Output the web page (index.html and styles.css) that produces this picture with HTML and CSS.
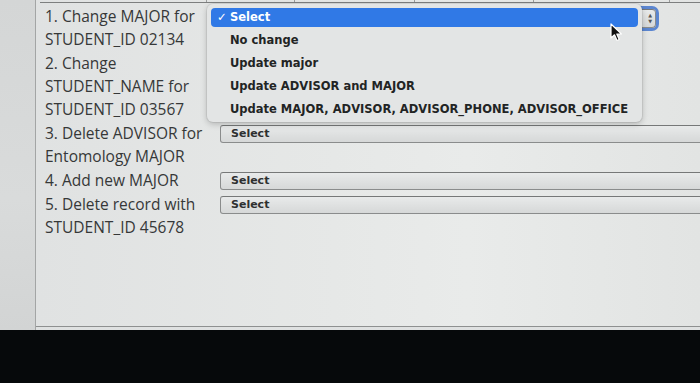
FILE: index.html
```html
<!DOCTYPE html>
<html>
<head>
<meta charset="utf-8">
<link rel="stylesheet" href="styles.css">
</head>
<body>
<div class="screen">
  <div class="gutter"></div>
  <div class="panel">
    <div class="head">
      <span class="hc c1"></span><span class="hc c2"></span><span class="hc c3"></span><span class="hc c4"></span><span class="hc c5"></span>
    </div>
    <div class="rows">
      <div class="row">
        <div class="label">1. Change MAJOR for STUDENT_ID 02134</div>
        <div class="field"><div class="select focused"><span class="stepper">&#9650;<br>&#9660;</span></div></div>
      </div>
      <div class="row">
        <div class="label">2. Change STUDENT_NAME for STUDENT_ID 03567</div>
        <div class="field"><div class="select hidden-under"></div></div>
      </div>
      <div class="row">
        <div class="label">3. Delete ADVISOR for Entomology MAJOR</div>
        <div class="field"><div class="select wide">Select</div></div>
      </div>
      <div class="row">
        <div class="label">4. Add new MAJOR</div>
        <div class="field"><div class="select wide">Select</div></div>
      </div>
      <div class="row">
        <div class="label">5. Delete record with STUDENT_ID 45678</div>
        <div class="field"><div class="select wide">Select</div></div>
      </div>
    </div>
    <div class="menu">
      <div class="opt active"><span class="check">&#10003;</span>Select</div>
      <div class="opt">No change</div>
      <div class="opt">Update major</div>
      <div class="opt">Update ADVISOR and MAJOR</div>
      <div class="opt">Update MAJOR, ADVISOR, ADVISOR_PHONE, ADVISOR_OFFICE</div>
    </div>
    <svg class="cursor" width="14" height="20" viewBox="0 0 14 20">
      <path d="M1 1 L1 15 L4.5 11.8 L7 17.5 L9.2 16.5 L6.8 11 L11.5 11 Z" fill="#111" stroke="#fff" stroke-width="1.2" stroke-linejoin="round"/>
    </svg>
  </div>
</div>
<div class="bezel"></div>
</body>
</html>
```
FILE: styles.css
```css
html, body {
  margin: 0;
  padding: 0;
  background: #06090b;
  overflow: hidden;
}
.screen {
  height: 330px;
  display: flex;
  background: #dfe1e1;
}
.gutter {
  width: 35px;
  background: linear-gradient(180deg, #d4d6d6, #d9dbdb 60%, #d2d4d4);
  border-right: 1px solid #a3a5a5;
}
.panel {
  flex: 1;
  position: relative;
  height: 327px;
  box-sizing: border-box;
  border-bottom: 1px solid #8e9090;
  background: linear-gradient(90deg, #e0e2e2, #e6e8e7 45%, #e9ebea 65%, #e2e4e3);
  overflow: hidden;
}
.head {
  height: 2px;
  margin-left: 4px;
  border-bottom: 1px solid #7d7f7f;
  display: flex;
}
.hc {
  display: block;
  height: 2px;
  border-right: 1px solid #9a9c9c;
  box-sizing: border-box;
}
.c1 { width: 167px; }
.c2 { width: 88px; }
.c3 { width: 120px; }
.c4 { width: 119px; }
.c5 { width: 136px; }
.rows {
  padding: 2px 0 0 9px;
  display: flex;
  flex-direction: column;
}
.row {
  display: grid;
  grid-template-columns: 175px 1fr;
  padding-bottom: 1px;
}
.label {
  font-family: "Open Sans", "Liberation Sans", sans-serif;
  font-size: 15.5px;
  line-height: 23px;
  color: #363838;
  width: 172px;
}
.field {
  padding-top: 3px;
}
.select {
  position: relative;
  box-sizing: border-box;
  height: 18px;
  width: 436px;
  padding-left: 10px;
  font-family: "DejaVu Sans", Verdana, sans-serif;
  font-weight: bold;
  font-size: 11px;
  line-height: 15px;
  color: #2e3030;
  background: linear-gradient(180deg, #e8eaea, #d6d8d8);
  border: 1px solid #8a8c8c;
  border-top-color: #767878;
  border-radius: 3px 0 0 3px;
}
.select.wide {
  width: 520px;
}
.select.hidden-under {
  width: 400px;
}
.select.focused {
  height: 19px;
  margin-top: 1px;
  border-radius: 4px;
  box-shadow: 0 0 0 3px #5b86d0;
}
.stepper {
  position: absolute;
  right: 3px;
  top: 2px;
  font-size: 5px;
  line-height: 6px;
  color: #555;
}
.menu {
  position: absolute;
  left: 171px;
  top: 4px;
  width: 435px;
  box-sizing: border-box;
  padding: 4px 4px 3px 4px;
  background: #e3e5e5;
  border-radius: 6px;
  box-shadow: 0 2px 6px rgba(0, 0, 0, 0.22), 0 0 0 1px rgba(0, 0, 0, 0.06);
  display: flex;
  flex-direction: column;
  gap: 4px;
}
.opt {
  height: 19px;
  line-height: 19px;
  padding-left: 19px;
  font-family: "DejaVu Sans", Verdana, sans-serif;
  font-weight: bold;
  font-size: 11.5px;
  color: #222424;
  border-radius: 4px;
  position: relative;
  white-space: nowrap;
}
.opt.active {
  background: #3079e6;
  color: #ffffff;
}
.check {
  position: absolute;
  left: 6px;
  font-weight: normal;
}
.cursor {
  position: absolute;
  left: 574px;
  top: 23px;
}
.bezel {
  height: 53px;
  background: #06090b;
}
```
